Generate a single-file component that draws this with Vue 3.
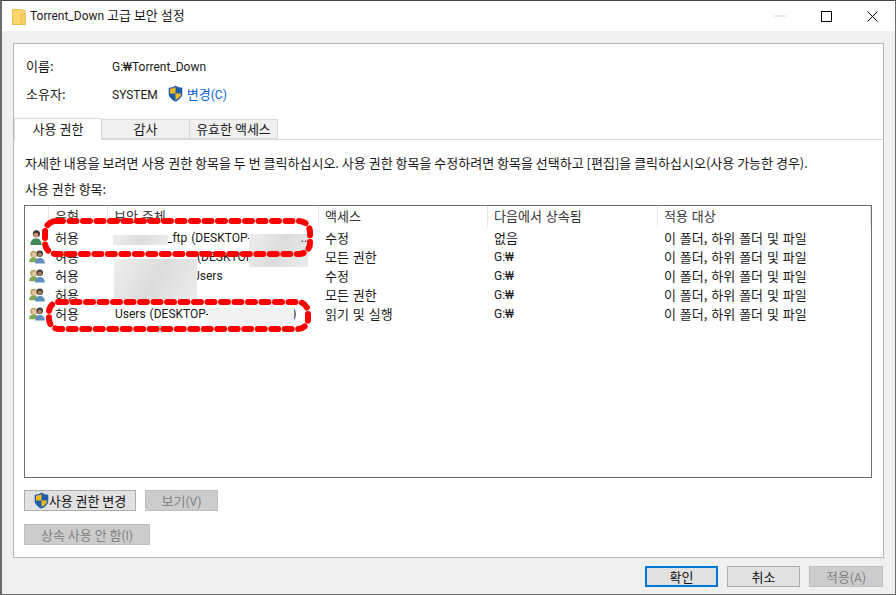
<script setup>
const rows = [
  { kind: 'user', type: '허용', who: '_ftp (DESKTOP-', whoCls: 'p1', access: '수정', from: '없음' },
  { kind: 'group', type: '허용', who: '(DESKTOP', whoCls: 'p2', access: '모든 권한', from: 'G:₩' },
  { kind: 'group', type: '허용', who: 'Users', whoCls: 'p3', access: '수정', from: 'G:₩' },
  { kind: 'group', type: '허용', who: '', whoCls: '', access: '모든 권한', from: 'G:₩' },
  { kind: 'group', type: '허용', who: 'Users (DESKTOP-', whoCls: 'p5', access: '읽기 및 실행', from: 'G:₩' },
]
</script>

<template>
  <div class="window">
    <header class="titlebar">
      <svg class="folder" width="14" height="17" viewBox="0 0 14 17">
        <path d="M.5 1.500h8l4.500 1v14H.5z" fill="#fbd66d" stroke="#e6bd50" />
        <path d="M9 6h4.500v10.500H9z" fill="#f7cf63" stroke="#e6bd50" />
      </svg>
      <span class="title"><span class="lat">Torrent_Down</span> 고급 보안 설정</span>
      <div class="controls">
        <span class="ctl"><svg width="12" height="2" viewBox="0 0 12 2"><path d="M0 1h12" stroke="#d8d8d8" /></svg></span>
        <span class="ctl"><svg width="11" height="11" viewBox="0 0 11 11"><rect x=".5" y=".5" width="10" height="10" fill="none" stroke="#000" /></svg></span>
        <span class="ctl"><svg width="11" height="11" viewBox="0 0 11 11"><path d="M.5.500l10 10M10.500.500l-10 10" stroke="#000" fill="none" /></svg></span>
      </div>
    </header>

    <main class="client">
      <section class="panel">
        <div class="info">
          <div class="info-row"><span class="lab">이름:</span><span><span class="lat">G:₩Torrent_Down</span></span></div>
          <div class="info-row">
            <span class="lab">소유자:</span><span class="owner"><span class="lat">SYSTEM</span></span>
            <svg class="shield" width="15" height="17" viewBox="0 0 15 17">
              <path d="M7.500.500C5.500 2 3 2.700.7 2.700v6c0 3.500 3 6.200 6.800 7.800 3.800-1.600 6.800-4.300 6.800-7.800v-6C12 2.700 9.500 2 7.500.500z" fill="#1f5fa8" />
              <path d="M7.500 2v6.500H2V3.700C4 3.500 6 3 7.500 2zM7.500 8.500H13c0 3-2.500 5-5.500 6.300z" fill="#f5b91e" />
            </svg>
            <a class="link">변경<span class="lat">(C)</span></a>
          </div>
        </div>

        <nav class="tabs">
          <span class="tab active">사용 권한</span>
          <span class="tab t2">감사</span>
          <span class="tab t3">유효한 액세스</span>
        </nav>

        <div class="pane">
          <p class="hint">자세한 내용을 보려면 사용 권한 항목을 두 번 클릭하십시오. 사용 권한 항목을 수정하려면 항목을 선택하고 [편집]을 클릭하십시오(사용 가능한 경우).</p>
          <p class="list-label">사용 권한 항목:</p>

          <div class="list">
            <div class="row head">
              <span></span><span>유형</span><span>보안 주체</span><span>액세스</span><span>다음에서 상속됨</span><span>적용 대상</span>
            </div>
            <div v-for="(r, i) in rows" :key="i" class="row body-row">
              <span class="ico" :class="r.kind">
                <svg v-if="r.kind === 'user'" width="12" height="15" viewBox="0 0 13 16">
                  <circle cx="7" cy="4" r="3.800" fill="#3b342e" />
                  <circle cx="6.500" cy="5.500" r="2.600" fill="#c9966f" />
                  <path d="M.5 16c0-5 2.500-7 6-7s6 2 6 7z" fill="#3f8a54" />
                </svg>
                <svg v-else width="16" height="14" viewBox="0 0 17 15">
                  <circle cx="5" cy="4.500" r="3.800" fill="#b8a96a" />
                  <circle cx="5.500" cy="5" r="2.400" fill="#e6c6a2" />
                  <path d="M0 13c0-3.500 2-5 5-5s4 1.500 4 5z" fill="#7ea856" />
                  <circle cx="11.500" cy="4" r="3.400" fill="#3b3a3a" />
                  <circle cx="11.500" cy="5" r="2.300" fill="#a87d60" />
                  <path d="M6.500 14.500c0-4 2-6 5-6s5.500 2 5.500 6z" fill="#5e8fbe" />
                </svg>
              </span>
              <span>{{ r.type }}</span>
              <span class="who" :class="r.whoCls"><span class="lat">{{ r.who }}<i v-if="i === 4" class="tail">)</i><i v-if="i === 0" class="dots">..</i></span></span>
              <span>{{ r.access }}</span>
              <span><span :class="{ lat: r.from !== '없음' }">{{ r.from }}</span></span>
              <span>이 폴더, 하위 폴더 및 파일</span>
            </div>
            <i class="blur b1"></i><i class="blur b2"></i><i class="blur b3"></i><i class="blur b4"></i>
          </div>

          <div class="btn-row first">
            <button class="btn change">
              <svg width="15" height="17" viewBox="0 0 15 17">
                <path d="M7.500.500C5.500 2 3 2.700.7 2.700v6c0 3.500 3 6.200 6.800 7.800 3.800-1.600 6.800-4.300 6.800-7.800v-6C12 2.700 9.500 2 7.500.500z" fill="#1f5fa8" />
                <path d="M7.500 2v6.500H2V3.700C4 3.500 6 3 7.500 2zM7.500 8.500H13c0 3-2.500 5-5.500 6.300z" fill="#f5b91e" />
              </svg>사용 권한 변경</button>
            <button class="btn off view"><span>보기<span class="lat">(V)</span></span></button>
          </div>
          <div class="btn-row second">
            <button class="btn off inherit"><span>상속 사용 안 함<span class="lat">(I)</span></span></button>
          </div>
        </div>
      </section>

      <footer class="actions">
        <button class="btn act ok">확인</button>
        <button class="btn act">취소</button>
        <button class="btn act off"><span>적용<span class="lat">(A)</span></span></button>
      </footer>
    </main>

    <svg class="marks" width="896" height="595" viewBox="0 0 896 595">
      <rect x="45" y="221" width="265" height="33" rx="11" />
      <rect x="49" y="302" width="259" height="27" rx="10" />
    </svg>
  </div>
</template>

<style>
html, body { margin: 0; background: #fff; }
</style>

<style scoped>
.window {
  position: relative;
  width: 896px;
  height: 595px;
  box-sizing: border-box;
  border-left: 2px solid #6b6b6b;
  border-right: 1px solid #6b6b6b;
  border-top: 1px solid #444;
  border-bottom: 1px solid #6b6b6b;
  display: flex;
  flex-direction: column;
  background: #f0f0f0;
  font-family: "Noto Sans CJK KR", sans-serif;
  font-size: 13px;
  color: #1a1a1a;
  overflow: hidden;
}
.lat { font-family: Roboto, "Noto Sans CJK KR", sans-serif; font-size: 12px; }
.titlebar {
  height: 30px;
  flex: none;
  background: #fff;
  display: flex;
  align-items: center;
  padding-left: 10px;
}
.folder { margin-right: 4px; }
.title { position: relative; top: -2px; }
.controls { margin-left: auto; display: flex; }
.ctl { width: 46px; height: 30px; display: flex; align-items: center; justify-content: center; }
.client {
  flex: 1;
  display: flex;
  flex-direction: column;
  padding: 12px 11px 0;
}
.panel {
  height: 515px;
  box-sizing: border-box;
  background: #fff;
  border: 1px solid #b5b5b5;
  display: flex;
  flex-direction: column;
}
.info { padding: 7px 0 0 12px; height: 67px; }
.info-row { height: 28px; display: flex; align-items: center; }
.lab { width: 86px; }
.owner { margin-right: 10px; }
.shield { margin-right: 4px; }
.link { color: #0066cc; }
.tabs { display: flex; height: 21px; padding-left: 0; border-bottom: 1px solid #d9d9d9; }
.tab {
  box-sizing: border-box;
  height: 20px;
  margin-top: 1px;
  width: 88px;
  background: #f0f0f0;
  border: 1px solid #d9d9d9;
  border-left: 0;
  text-align: center;
  line-height: 17px;
}
.tab.active { background: #fff; height: 22px; border-bottom: 0; border-left: 1px solid #d9d9d9; margin-top: 0; line-height: 19px; position: relative; z-index: 1; }
.pane { padding: 0 11px 0 10px; }
.hint { margin: 14px 0 0 1px; line-height: 18px; white-space: nowrap; }
.list-label { margin: 8px 0 0 1px; line-height: 18px; }
.list {
  position: relative;
  margin-top: 7px;
  height: 273px;
  box-sizing: border-box;
  background: #fff;
  border: 1px solid #6d6d6d;
  overflow: hidden;
}
.row {
  display: grid;
  grid-template-columns: 24px 59px 211px 169px 170px 1fr;
  height: 19px;
  align-items: center;
  white-space: nowrap;
  word-spacing: 1px;
}
.row > span { padding-left: 6px; line-height: 19px; }
.row > span:first-child { padding-left: 0; }
.head { height: 21px; color: #333; }
.head > span { height: 21px; line-height: 20px; border-right: 1px solid #e5e5e5; box-sizing: border-box; }
.body-row > span.ico { display: flex; align-items: center; height: 19px; }
.body-row > span.ico.user { padding-left: 5px; }
.body-row > span.ico.group { padding-left: 4px; }
.who.p1 { padding-left: 59px !important; }
.who.p2 { padding-left: 89px !important; }
.who.p3 { padding-left: 84px !important; }
.who.p5 { padding-left: 7px !important; }
.tail { font-style: normal; margin-left: 83px; }
.dots { font-style: normal; margin-left: 50px; position: relative; z-index: 1; }
.blur { position: absolute; display: block; background: linear-gradient(120deg, #efefef, #dcdcdc 50%, #ececec); }
.b1 { left: 88px; top: 29px; width: 55px; height: 10px; }
.b2 { left: 89px; top: 53px; width: 83px; height: 40px; }
.b3 { left: 224px; top: 28px; width: 59px; height: 33px; }
.b4 { left: 183px; top: 102px; width: 86px; height: 19px; background: #f3f3f3; }
.btn-row { display: flex; gap: 9px; }
.btn-row.first { margin-top: 12px; }
.btn-row.second { margin-top: 13px; }
.btn {
  font: inherit;
  color: #111;
  box-sizing: border-box;
  height: 21px;
  padding: 0;
  background: #e1e1e1;
  border: 1px solid #adadad;
  display: inline-flex;
  align-items: center;
  justify-content: center;
}
.change { width: 112px; }
.view { width: 73px; }
.inherit { width: 126px; }
.off { background: #cccccc; border-color: #bfbfbf; color: #838383; }
.actions { display: flex; justify-content: flex-end; gap: 9px; padding-top: 8px; padding-right: 1px; }
.act { width: 73px; }
.act:last-child { width: 74px; }
.ok { border: 2px solid #0078d7; }
.marks { position: absolute; left: -2px; top: -1px; pointer-events: none; }
.marks rect { fill: none; stroke: #ff0000; stroke-width: 6; stroke-linecap: round; stroke-dasharray: 7 6.5; }
</style>
